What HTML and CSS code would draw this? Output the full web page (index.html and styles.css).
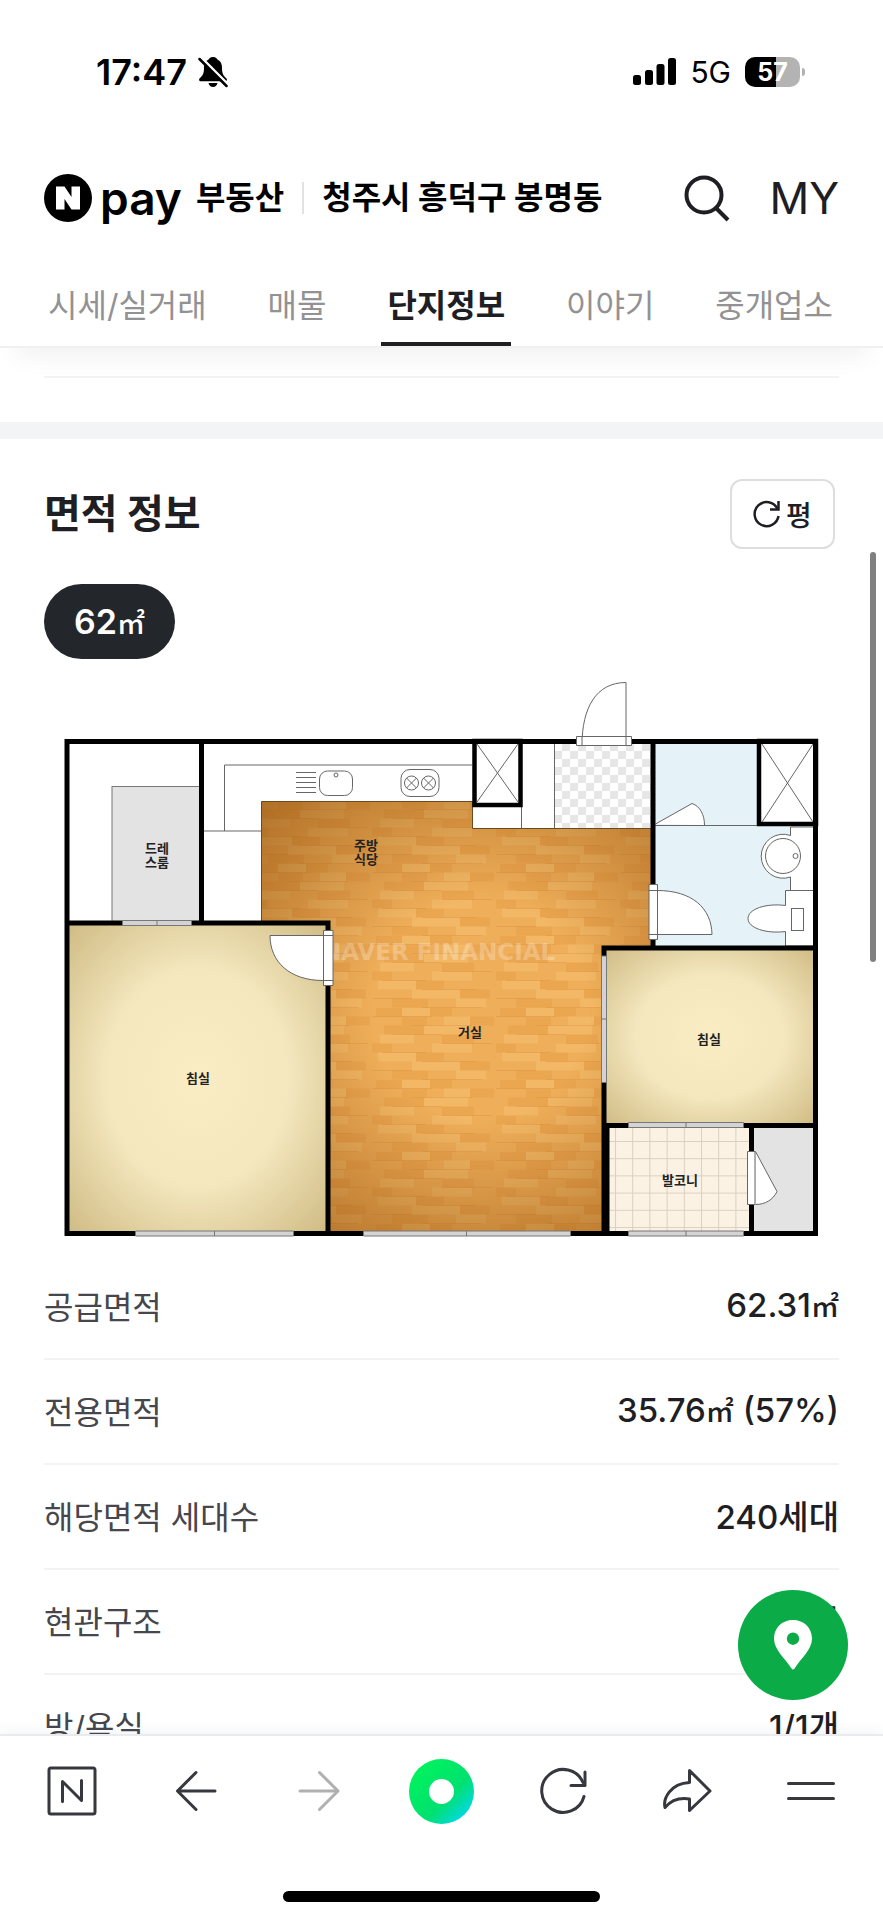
FILE: index.html
```html
<!DOCTYPE html>
<html lang="ko">
<head>
  <meta charset="UTF-8">
  <meta name="viewport" content="width=device-width, initial-scale=1.0">
  <title>Npay 부동산</title>
  <link rel="stylesheet" href="styles.css">
</head>
<body>
  <header class="top-area">
    <div class="status-bar">
      <div class="status-left">
        <span class="clock">17:47</span>
        <svg class="bell" width="30" height="32" viewBox="0 0 30 32">
          <path d="M15 1c-3 0-4 1.600-4.400 2.600C7 5.300 6 8.500 6 12c0 6-1.500 7.500-4.500 10.500-.8 1-.4 2.700 1 2.700h25c1.400 0 1.800-1.700 1-2.700C25.500 19.500 24 18 24 12c0-3.500-1-6.700-4.600-8.400C19 2.600 18 1 15 1z"/>
          <path d="M10.500 27h9c-.6 2.600-2.300 4-4.500 4s-3.900-1.400-4.500-4z"/>
          <path d="M3 1.500l27 27" stroke="#fff" stroke-width="3"/>
          <path d="M1.500 3l27 27" stroke="#000" stroke-width="2.500" stroke-linecap="round"/>
        </svg>
      </div>
      <div class="status-right">
        <svg width="43" height="28" viewBox="0 0 43 28">
          <rect x="0" y="17" width="8" height="10" rx="2.500"/>
          <rect x="12" y="12" width="8" height="15" rx="2.500"/>
          <rect x="23.500" y="6" width="8" height="21" rx="2.500"/>
          <rect x="35" y="0" width="8" height="27" rx="2.500"/>
        </svg>
        <span class="network">5G</span>
        <span class="battery"><span class="battery-level">57</span></span>
      </div>
    </div>

    <div class="header-row">
      <a href="#" class="logo">
        <svg width="48" height="48" viewBox="0 0 48 48">
          <circle cx="24" cy="24" r="24"/>
          <path d="M12 12.500h8.500l7 10.500V12.500H36v23h-8.500l-7-10.500v10.500H12z" fill="#fff"/>
        </svg>
        <span class="logo-pay">pay</span>
        <span class="logo-service">부동산</span>
      </a>
      <a href="#" class="location">청주시 흥덕구 봉명동</a>
      <div class="header-buttons">
        <button type="button" aria-label="검색">
          <svg width="48" height="48" viewBox="0 0 48 48" fill="none" stroke="#1e1e23" stroke-width="4">
            <circle cx="21" cy="21" r="17.500"/>
            <path d="M33 34l12 12"/>
          </svg>
        </button>
        <a href="#" class="my">MY</a>
      </div>
    </div>

    <nav class="tabs">
      <a href="#" class="tab">시세/실거래</a>
      <a href="#" class="tab">매물</a>
      <a href="#" class="tab active">단지정보</a>
      <a href="#" class="tab">이야기</a>
      <a href="#" class="tab">중개업소</a>
    </nav>
  </header>

  <main class="content">
    <div class="prev-section"></div>

    <section class="area-info">
      <div class="section-head">
        <h2>면적 정보</h2>
        <button type="button" class="unit-button">
          <svg width="28" height="28" viewBox="0 0 28 28" fill="none" stroke="#1e1e23" stroke-width="2.500">
            <path d="M25.500 16A12 12 0 1 1 24.500 9"/>
            <path d="M25.500 1v8.500H17"/>
          </svg>
          <span>평</span>
        </button>
      </div>

      <button type="button" class="area-chip">62<span class="unit">㎡</span></button>

      <svg class="floor-plan" viewBox="44 672 795 580" role="img" aria-label="평면도">
        <defs>
          <radialGradient id="room" r="0.700">
            <stop offset="0" stop-color="#faedc3"/>
            <stop offset="0.500" stop-color="#f4e7be"/>
            <stop offset="1" stop-color="#cfbb84"/>
          </radialGradient>
          <radialGradient id="woodShade" gradientUnits="userSpaceOnUse" cx="480" cy="1010" r="310">
            <stop offset="0.350" stop-color="#8a4a08" stop-opacity="0"/>
            <stop offset="1" stop-color="#8a4a08" stop-opacity="0.650"/>
          </radialGradient>
          <pattern id="wood" width="124" height="72" patternUnits="userSpaceOnUse">
            <rect width="124" height="72" fill="#efae59"/>
            <path d="M4 4h26M58 4h22M30 13h25M98 13h24M12 22h40M70 31h32M0 40h20M44 49h28M88 58h30M20 67h36" stroke="#e69a45" stroke-width="9" opacity="0.450"/>
            <path d="M30 4h28M72 13h26M52 22h44M8 31h34M60 40h40M6 49h38M40 58h48M84 67h30" stroke="#f5c273" stroke-width="9" opacity="0.450"/>
            <path d="M0 8.500h60M40 17.500h60M20 26.500h50M70 35.500h50M10 44.500h44M50 53.500h54M0 62.500h40M50 71.500h60" stroke="#dd8d3e" opacity="0.400"/>
          </pattern>
          <pattern id="checker" x="554" y="743" width="16" height="16" patternUnits="userSpaceOnUse">
            <rect width="16" height="16" fill="#fff"/>
            <path d="M8 0h8v8H8zM0 8h8v8H0z" fill="#e6e6e6"/>
          </pattern>
          <pattern id="tile" x="615" y="1141" width="17.200" height="17.200" patternUnits="userSpaceOnUse">
            <rect width="17.200" height="17.200" fill="#fcf2e4"/>
            <path d="M0 .5h17.200M.5 0v17.200" stroke="#d9cfc2"/>
          </pattern>
        </defs>

        <!-- floors -->
        <rect x="67" y="741" width="749" height="492" fill="#fff"/>
        <rect x="67" y="923" width="261" height="310" fill="url(#room)"/>
        <path d="M261.500 801.500H472.500V828.500H653V948H604V1233H328V923H261.500z" fill="url(#wood)"/>
        <path d="M261.500 801.500H472.500V828.500H653V948H604V1233H328V923H261.500z" fill="url(#woodShade)" stroke="#6b4a20"/>
        <rect x="604" y="948" width="212" height="177" fill="url(#room)"/>
        <rect x="653" y="741" width="163" height="207" fill="#e5f2f7"/>
        <rect x="554" y="743" width="98" height="85" fill="url(#checker)"/>
        <rect x="608" y="1125" width="143" height="108" fill="url(#tile)"/>
        <rect x="752" y="1125" width="64" height="108" fill="#e3e3e3"/>
        <rect x="112" y="786.500" width="90" height="136" fill="#e3e3e3" stroke="#777"/>

        <!-- kitchen -->
        <g fill="none" stroke="#666">
          <path d="M472 765H224.500V831M204 831H261.500M554.500 743V828M521.500 806V828"/>
          <path d="M296 772.500h20M296 777.500h20M296 782.500h20M296 787.500h20M296 792.500h20"/>
          <rect x="319.500" y="771" width="33" height="24.500" rx="8"/>
          <circle cx="336" cy="775" r="2"/>
          <rect x="401" y="769.500" width="38" height="27" rx="9"/>
          <circle cx="411.500" cy="783" r="7"/>
          <circle cx="428.500" cy="783" r="7"/>
          <path d="M406.500 778l10 10m0-10l-10 10M423.500 778l10 10m0-10l-10 10"/>
        </g>

        <!-- shafts -->
        <g fill="#fff" stroke="#000" stroke-width="4.500">
          <rect x="474.500" y="741" width="46" height="64"/>
          <rect x="759" y="741" width="57" height="83"/>
        </g>
        <path d="M477 744l41 58m0-58l-41 58M762 744l51 78m0-78l-51 78" stroke="#666"/>

        <!-- bathroom -->
        <g fill="#fff" stroke="#666">
          <path d="M655 825.500H757" fill="none"/>
          <path d="M655.500 824L692 803.500C700 806 704.500 815 704.500 825"/>
          <path d="M814 827H790.500V835.500A22 22 0 1 0 790.500 877V890.500H814"/>
          <circle cx="783" cy="856" r="17.500"/>
          <circle cx="795.500" cy="856" r="2.500"/>
          <path d="M814 890.500H785.500V905.500C766 903 748 909 748 918.500S766 934 785.500 931.500V946H814"/>
          <rect x="791.500" y="908.500" width="12" height="22"/>
        </g>

        <text class="watermark" x="322" y="960">NAVER FINANCIAL</text>

        <!-- walls -->
        <g fill="none" stroke="#000" stroke-width="5">
          <path d="M67 741.500H815.500V1233.500H67z"/>
          <path d="M201.500 741V923M67 923H328V1233M653 741V948M604 1125V948H816M602 1125.500H816M751.500 1125V1233"/>
          <path d="M605.500 1125V1233" stroke-width="8"/>
        </g>

        <!-- windows -->
        <g fill="#d3d3d3" stroke="#777">
          <path d="M122.500 920.500h69v5h-69zM157 920.500v5"/>
          <path d="M135.500 1231h158v5h-158zM214.500 1231v5"/>
          <path d="M363.500 1231h207v5h-207zM466.500 1231v5"/>
          <path d="M628.500 1231h115v5h-115zM686 1231v5"/>
          <path d="M628.500 1122.500h115v5h-115zM686 1122.500v5"/>
          <path d="M601.500 956h5v126.500h-5zM601.500 1019h5"/>
        </g>

        <!-- doors -->
        <g fill="#fff" stroke="#666">
          <path d="M626 745V682.500C596 682.500 582 708 582 745"/>
          <path d="M576.500 736.500h55v9h-55z"/>
          <path d="M582 736.500v9M626 736.500v9"/>
          <path d="M649 890.500H657C692 890.500 711.500 908 712 934.500H649"/>
          <path d="M649 884.500h8.500v55H649z"/>
          <path d="M649 890.500h8.500M649 934.500h8.500"/>
          <path d="M333 935.500H270C270 962 290 980.500 323 980.500H333"/>
          <path d="M323.500 930.500h9.500v55h-9.500z"/>
          <path d="M323.500 935.500h9.500M323.500 980.500h9.500"/>
          <path d="M755.500 1151.500L777 1191.500C773 1200 765 1204.500 755.500 1204.500"/>
          <path d="M747.500 1151.500h7.500v53h-7.500z"/>
        </g>

        <g class="room-name">
          <text x="157" y="853">드레</text>
          <text x="157" y="867">스룸</text>
          <text x="366" y="850">주방</text>
          <text x="366" y="864">식당</text>
          <text x="470" y="1037">거실</text>
          <text x="198" y="1083">침실</text>
          <text x="709" y="1044">침실</text>
          <text x="680" y="1185">발코니</text>
        </g>
      </svg>

      <dl class="info-list">
        <div class="info-row"><dt>공급면적</dt><dd>62.31<span class="unit">㎡</span></dd></div>
        <div class="info-row"><dt>전용면적</dt><dd>35.76<span class="unit">㎡</span> (57%)</dd></div>
        <div class="info-row"><dt>해당면적 세대수</dt><dd>240세대</dd></div>
        <div class="info-row"><dt>현관구조</dt><dd>계단식</dd></div>
        <div class="info-row"><dt>방/욕실</dt><dd>1/1개</dd></div>
      </dl>
    </section>

    <div class="scroll-thumb"></div>
    <button type="button" class="map-button" aria-label="지도">
      <svg width="40" height="50" viewBox="0 0 40 50">
        <path fill-rule="evenodd" d="M20 0C9 0 1 8 1 18.500 1 30 12 38 18.500 48.500q1.500 2 3 0C28 38 39 30 39 18.500 39 8 31 0 20 0zm0 12.500a6.200 6.200 0 1 1 0 12.400 6.200 6.200 0 0 1 0-12.400z" fill="#fff"/>
      </svg>
    </button>
  </main>

  <footer class="bottom-area">
    <nav class="toolbar">
      <button type="button" aria-label="네이버 홈">
        <svg width="50" height="50" viewBox="0 0 50 50">
          <rect x="2" y="2" width="46" height="46" rx="2"/>
          <path d="M15.500 35.500V15.500L34.500 34.500V14.500"/>
        </svg>
      </button>
      <button type="button" aria-label="뒤로">
        <svg width="50" height="50" viewBox="0 0 50 50"><path d="M45 25H8M26 6.500L7.500 25 26 43.500"/></svg>
      </button>
      <button type="button" class="disabled" aria-label="앞으로">
        <svg width="50" height="50" viewBox="0 0 50 50"><path d="M7 25h37M26.500 6.500L45 25 26.500 43.500"/></svg>
      </button>
      <button type="button" aria-label="그린닷"><span class="green-dot"></span></button>
      <button type="button" aria-label="새로고침">
        <svg width="50" height="50" viewBox="0 0 50 50">
          <path d="M44 30.500A21.500 21.500 0 1 1 43 16.500"/>
          <path d="M45 6v13.500H31"/>
        </svg>
      </button>
      <button type="button" aria-label="공유">
        <svg width="50" height="50" viewBox="0 0 50 50"><path d="M26.500 4.500L47 25 26.500 44.500V33C17 31.500 8 34.500 2 41.500 0 33 7 17.500 26.500 16.500z"/></svg>
      </button>
      <button type="button" aria-label="메뉴">
        <svg width="50" height="50" viewBox="0 0 50 50"><path d="M2.500 17.500h45M2.500 32.500h45"/></svg>
      </button>
    </nav>
    <div class="home-indicator"></div>
  </footer>
</body>
</html>
```
FILE: styles.css
```css
* {
  box-sizing: border-box;
}
body {
  margin: 0;
  height: 100vh;
  display: flex;
  flex-direction: column;
  font-family: Inter, "Noto Sans CJK KR", sans-serif;
  background-color: #fff;
  color: #1e1e23;
}
a {
  color: inherit;
  text-decoration: none;
}
button {
  padding: 0;
  border: none;
  background: none;
  font-family: inherit;
  color: inherit;
  cursor: pointer;
}
svg {
  display: block;
}

/* header */
.top-area {
  position: relative;
  z-index: 1;
  background-color: #fff;
  border-bottom: 2px solid #f0f0f1;
  box-shadow: 0 24px 24px -16px rgba(0, 0, 0, 0.06);
}
.status-bar {
  display: flex;
  justify-content: space-between;
  align-items: center;
  height: 144px;
  padding: 0 83px 0 96px;
  color: #000;
}
.status-left,
.status-right {
  display: flex;
  align-items: center;
}
.status-left {
  gap: 11px;
}
.status-right {
  gap: 14px;
}
.clock {
  font-size: 36px;
  font-weight: 600;
}
.network {
  font-size: 30px;
}
.battery {
  position: relative;
  width: 55px;
  height: 30px;
  border-radius: 10px;
  background: linear-gradient(to right, #000 57%, #b3b3b3 57%);
  color: #fff;
  font-size: 25px;
  font-weight: 700;
  line-height: 30px;
  text-align: center;
}
.battery::after {
  content: "";
  position: absolute;
  top: 11px;
  right: -5px;
  width: 3px;
  height: 8px;
  border-radius: 0 3px 3px 0;
  background-color: #b3b3b3;
}
.header-row {
  display: flex;
  align-items: center;
  height: 107px;
  padding: 0 44px;
}
.logo {
  display: flex;
  align-items: center;
  color: #000;
}
.logo-pay {
  margin-left: 8px;
  font-size: 46px;
  font-weight: 600;
  line-height: 48px;
}
.logo-service,
.location {
  font-size: 32px;
  font-weight: 700;
  line-height: 32px;
}
.logo-service {
  margin-left: 14px;
}
.location {
  margin-left: 18px;
  padding-left: 18px;
  border-left: 2px solid #e2e2e2;
  color: #000;
}
.header-buttons {
  display: flex;
  align-items: center;
  gap: 38px;
  margin-left: auto;
}
.my {
  font-size: 44px;
  line-height: 48px;
}
.tabs {
  display: flex;
  justify-content: space-between;
  padding: 0 44px 0 42px;
}
.tab {
  padding: 35px 6px 16px;
  border-bottom: 4px solid transparent;
  font-size: 32px;
  line-height: 40px;
  color: #929294;
}
.tab.active {
  border-color: #1e1e23;
  font-weight: 700;
  color: #1e1e23;
}

/* content */
.content {
  position: relative;
  flex: 1;
  min-height: 0;
  overflow: hidden;
}
.prev-section {
  height: 74px;
  padding: 28px 44px 0;
}
.prev-section::before {
  content: "";
  display: block;
  height: 2px;
  background-color: #f3f3f4;
}
.area-info {
  border-top: 17px solid #f3f4f6;
  padding: 40px 44px 0;
}
.section-head {
  display: flex;
  justify-content: space-between;
  align-items: center;
  padding-right: 4px;
}
h2 {
  margin: 0;
  font-size: 40px;
  line-height: 70px;
}
.unit-button {
  display: flex;
  align-items: center;
  justify-content: center;
  gap: 5px;
  width: 105px;
  height: 70px;
  border: 2px solid #dedede;
  border-radius: 12px;
  font-size: 28px;
  font-weight: 500;
}
.area-chip {
  display: block;
  height: 75px;
  margin: 35px 0 13px;
  padding: 0 30px;
  border-radius: 38px;
  background-color: #23272c;
  color: #fff;
  font-size: 34px;
  font-weight: 600;
}
.unit {
  font-size: 28px;
  font-weight: 500;
}
.floor-plan {
  width: 100%;
  height: auto;
}
.room-name {
  font-size: 13px;
  font-weight: 700;
  text-anchor: middle;
  fill: #222;
}
.watermark {
  font-family: "DejaVu Sans", sans-serif;
  font-size: 23px;
  font-weight: 700;
  fill: #fff;
  opacity: 0.25;
}
.info-list {
  margin: 3px 0 0;
}
.info-row {
  display: flex;
  justify-content: space-between;
  align-items: center;
  height: 105px;
  padding-bottom: 4px;
  border-bottom: 2px solid #f3f3f4;
}
dt {
  font-size: 32px;
  color: #46464d;
}
dd {
  margin: 0;
  font-size: 33px;
  font-weight: 500;
}
.scroll-thumb {
  position: absolute;
  top: 204px;
  right: 7px;
  width: 6px;
  height: 410px;
  border-radius: 3px;
  background-color: #808080;
}
.map-button {
  position: absolute;
  right: 35px;
  bottom: 34px;
  display: flex;
  align-items: center;
  justify-content: center;
  width: 110px;
  height: 110px;
  border-radius: 50%;
  background-color: #0bab48;
}

/* bottom bar */
.bottom-area {
  position: relative;
  border-top: 2px solid #e9ebee;
  background-color: #fff;
  box-shadow: 0 -4px 12px rgba(60, 80, 120, 0.05);
}
.toolbar {
  display: flex;
  justify-content: space-between;
  padding: 22px 39px 0;
}
.toolbar button {
  display: flex;
  align-items: center;
  justify-content: center;
  width: 66px;
  height: 66px;
}
.toolbar svg {
  fill: none;
  stroke: #36383e;
  stroke-width: 3;
  stroke-linecap: round;
  stroke-linejoin: round;
}
.toolbar .disabled svg {
  stroke: #b0b0b0;
}
.green-dot {
  width: 65px;
  height: 65px;
  border: 20px solid transparent;
  border-radius: 50%;
  background: linear-gradient(#fff, #fff) padding-box, linear-gradient(135deg, #00f060 20%, #00e070 60%, #00d8f0 90%) border-box;
}
.home-indicator {
  width: 317px;
  height: 11px;
  margin: 67px auto 18px;
  border-radius: 6px;
  background-color: #000;
}
```
